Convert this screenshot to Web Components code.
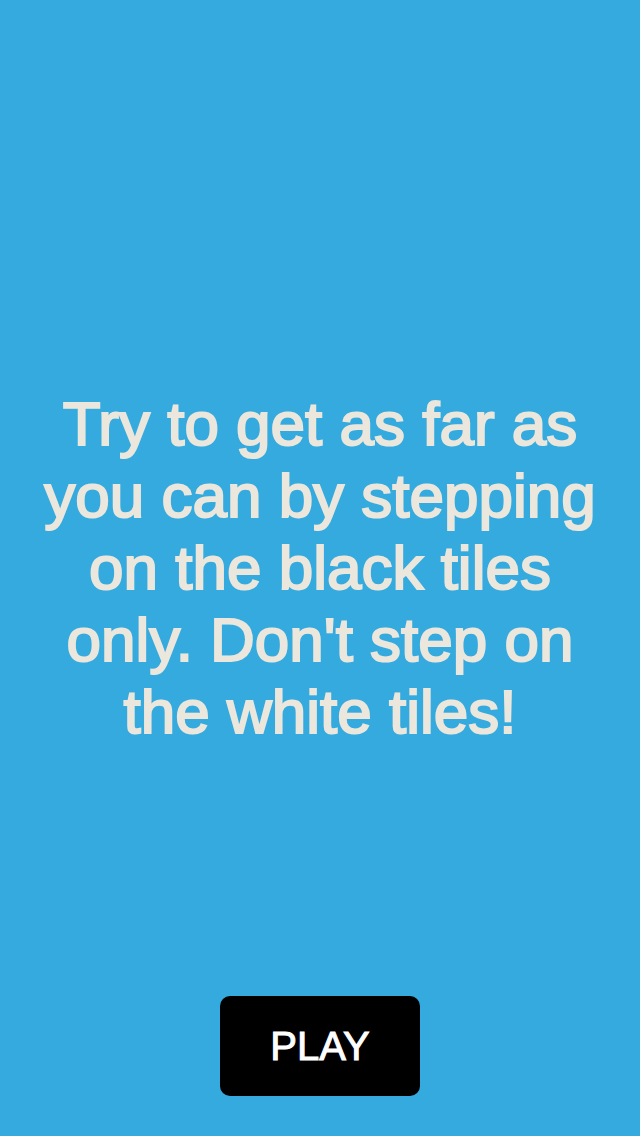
<!DOCTYPE html>
<html lang="en">
<head>
<meta charset="utf-8">
<meta name="viewport" content="width=device-width, initial-scale=1">
<title>Black Tiles</title>
<style>
  body {
    margin: 0;
    background: #34aadf;
    font-family: "Liberation Sans", Arial, sans-serif;
  }
</style>
</head>
<body>

<template id="intro-screen">
  <style>
    :host {
      display: grid;
      grid-template-rows: 1fr auto 1fr;
      justify-items: center;
      box-sizing: border-box;
      min-height: 100vh;
      padding: 40px 20px;
      color: #ebe7dc;
    }

    .message {
      grid-row: 2;
    }

    .action {
      grid-row: 3;
      align-self: end;
    }
  </style>
  <main class="message"><slot></slot></main>
  <div class="action"><slot name="action"></slot></div>
</template>

<template id="game-hint">
  <style>
    :host {
      display: block;
    }

    p {
      max-width: 580px;
      margin: 0;
      font-size: 62px;
      line-height: 72px;
      text-align: center;
      -webkit-text-stroke: 2px currentColor;
    }
  </style>
  <p><slot></slot></p>
</template>

<template id="game-button">
  <style>
    :host {
      display: block;
    }

    button {
      width: 200px;
      height: 100px;
      border: 0;
      border-radius: 10px;
      background: #000;
      color: #fff;
      font: inherit;
      font-size: 40px;
      -webkit-text-stroke: 1px currentColor;
      cursor: pointer;
    }
  </style>
  <button type="button"><slot></slot></button>
</template>

<intro-screen>
  <game-hint>Try to get as far as you can by stepping on the black tiles only. Don't step on the white tiles!</game-hint>
  <game-button slot="action">PLAY</game-button>
</intro-screen>

<script>
  class TemplateElement extends HTMLElement {
    constructor(){
      super();
      this.shadow = this.attachShadow({mode: 'open'});
      const template = document.getElementById(this.localName);
      this.shadow.appendChild(template.content.cloneNode(true));
    }
  }

  class IntroScreen extends TemplateElement {}
  class GameHint extends TemplateElement {}
  class GameButton extends TemplateElement {}

  window.customElements.define('intro-screen', IntroScreen);
  window.customElements.define('game-hint', GameHint);
  window.customElements.define('game-button', GameButton);
</script>
</body>
</html>
